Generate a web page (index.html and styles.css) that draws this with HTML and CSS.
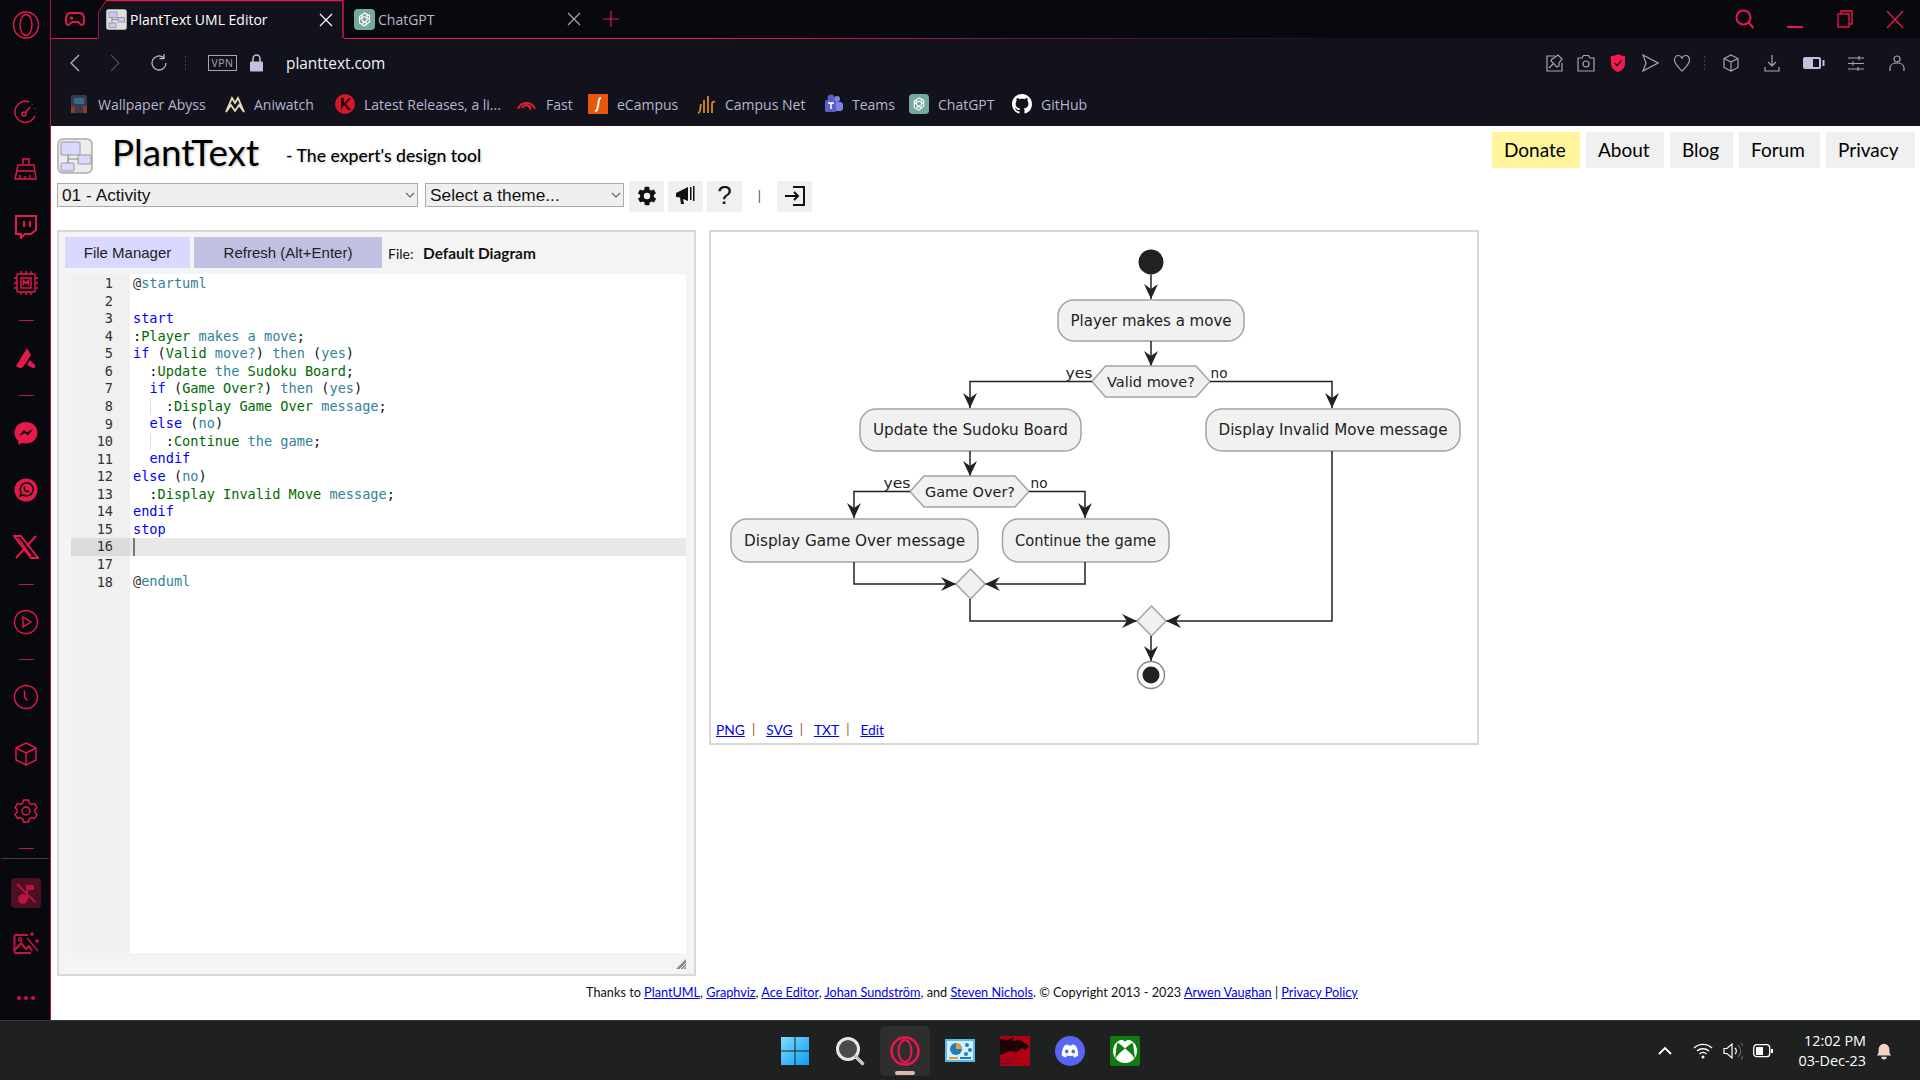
FILE: index.html
```html
<!DOCTYPE html>
<html lang="en">
<head>
<meta charset="utf-8">
<title>PlantText UML Editor</title>
<link rel="stylesheet" href="styles.css">
</head>
<body>
<div class="screen">
  <div class="desk">
    <aside class="side">
      <div class="brand"><svg class="ic30" viewBox="0 0 30 30"><ellipse cx="15" cy="15" rx="12.5" ry="13" class="ln"/><ellipse cx="15" cy="15" rx="6" ry="10.5" class="ln"/></svg></div>
      <div class="si first"><svg class="ic26" viewBox="0 0 26 26"><path d="M22 17A10.500 10.500 0 1 1 16 3" class="ln"/><path d="M19 5l.5.5M22 9l.3.7M23 13v.6" class="ln"/><circle cx="11" cy="15" r="2" class="ln"/><path d="M13 13l4-5" class="ln"/></svg></div>
      <div class="si"><svg class="ic26" viewBox="0 0 26 26"><path d="M10 8V3h6v5M5 9h16l2 14H2z" class="ln"/><path d="M4 15h17M7 23v-4M12 23v-3M17 23v-4" class="ln"/></svg></div>
      <div class="si"><svg class="ic26" viewBox="0 0 26 26"><path d="M3 3h20v14l-5 4h-6l-4 4v-4H3z" class="ln2"/><path d="M11 8v6M17 8v6" class="ln2"/></svg></div>
      <div class="si"><svg class="ic26" viewBox="0 0 26 26"><rect x="4" y="4" width="18" height="18" rx="1" class="ln"/><rect x="8" y="8" width="10" height="10" class="ln"/><path d="M10.500 15.500v-5l2.500 3 2.500-3v5" class="ln"/><path d="M8 1v3M13 1v3M18 1v3M8 22v3M13 22v3M18 22v3M1 8h3M1 13h3M1 18h3M22 8h3M22 13h3M22 18h3" class="ln"/></svg></div>
      <div class="sep"><i class="dash"></i></div>
      <div class="si"><svg class="ic26" viewBox="0 0 26 26"><path d="M3 21L14 3l4 7-8 12c-2 2-5 1-7-1zM17 15l5 5c1 2-1 4-2 3l-6-3z" class="fl"/></svg></div>
      <div class="sep"><i class="dash"></i></div>
      <div class="si"><svg class="ic26" viewBox="0 0 26 26"><path d="M13 2C6.500 2 1.500 6.500 1.500 12.700c0 3.400 1.400 6.200 3.800 8.100V25l3.900-2.100c1.200.3 2.500.5 3.800.5 6.500 0 11.500-4.600 11.500-10.700S19.500 2 13 2z" class="fl"/><path d="M6 16l5-6 3 2.500L20 9l-5 6.500-3-2.500z" fill="#08080f"/></svg></div>
      <div class="si"><svg class="ic26" viewBox="0 0 26 26"><circle cx="13" cy="13" r="11.500" class="fl"/><path d="M7 19l1-3.500a6.500 6.500 0 1 1 2.500 2.500z" fill="none" stroke="#08080f" stroke-width="1.500"/><path d="M10.500 10.500c0 3 2 5 5 5l1-1.500-2-1-1 .7c-.8-.5-1.300-1-1.700-1.800l.7-1-1-2z" fill="#08080f"/></svg></div>
      <div class="si"><svg class="ic26" viewBox="0 0 26 26"><path d="M1 2h7l17 22h-7zM23 2L14 12M3 24l9-10" class="ln2"/><path d="M5 4l13 18" class="ln"/></svg></div>
      <div class="sep"><i class="dash"></i></div>
      <div class="si"><svg class="ic26" viewBox="0 0 26 26"><circle cx="13" cy="13" r="11.500" class="ln"/><path d="M10 8v10l8-5z" class="ln"/></svg></div>
      <div class="sep"><i class="dash"></i></div>
      <div class="si"><svg class="ic26" viewBox="0 0 26 26"><circle cx="13" cy="13" r="11.500" class="ln"/><path d="M11.500 6.500v6.500l3 3.500" class="ln"/></svg></div>
      <div class="si"><svg class="ic26" viewBox="0 0 26 26"><path d="M13 2l10 5v12l-10 5-10-5V7zM3 7l10 5 10-5M13 12v12" class="ln"/></svg></div>
      <div class="si"><svg class="ic26" viewBox="0 0 26 26"><path d="M10.500 2h5l.7 3 2.400 1.400 3-.9 2.400 4.200-2.200 2.100v2.400l2.200 2.100-2.400 4.200-3-.9-2.400 1.400-.7 3h-5l-.7-3-2.400-1.400-3 .9L2 16.300l2.200-2.100v-2.400L2 9.700l2.400-4.200 3 .9 2.400-1.400z" class="ln"/><circle cx="13" cy="13" r="4" class="ln"/></svg></div>
      <div class="sep"><i class="dash"></i></div>
      <div class="sidebreak"></div>
      <div class="si music"><span class="musicbox"><svg class="ic26" viewBox="0 0 26 26"><circle cx="10" cy="19" r="5" fill="#b8143f"/><path d="M13 5h8v5h-6v9h-2z" fill="#b8143f"/><path d="M4 4l18 18" stroke="#b8143f" stroke-width="2"/></svg></span></div>
      <div class="si short"><svg class="ic26 dim" viewBox="0 0 26 26"><path d="M15 5H3a1.500 1.500 0 0 0-1.500 1.500v15A1.500 1.500 0 0 0 3 23h15" class="ln2"/><path d="M2 20l6-7 5 6 3-3 3 5" class="ln2"/><circle cx="7" cy="9.500" r="1.500" class="ln"/><path d="M14 8l11 13M19 2v4M17 4h4M24 9v4M22 11h4" class="ln"/></svg></div>
      <div class="si dots"><i></i><i></i><i></i></div>
    </aside>

    <div class="browser">
      <div class="tabs">
        <div class="gamebtn"><svg class="ic20" viewBox="0 0 20 20"><path d="M5 4h10c2.500 0 4 3 4 7 0 3-1 5-2.500 5S14 13 13 13H7c-1 0-2 3-3.500 3S1 14 1 11c0-4 1.500-7 4-7z" class="ln2"/><path d="M5 9h3M6.500 7.500v3M13 8h.1M15 10h.1" class="ln2"/></svg></div>
        <div class="tab active">
          <svg class="tabedge" viewBox="0 0 246 39" preserveAspectRatio="none"><path d="M0 38V12L8 .5H245V38" fill="none" stroke="#e6194b" stroke-width="1.300"/></svg>
          <svg class="ic21 fav" viewBox="0 0 21 21"><rect x=".5" y=".5" width="20" height="20" rx="2" fill="#dfdfdb" stroke="#aaa"/><rect x="3" y="3" width="8" height="5.500" fill="#c9c8ff" stroke="#888" stroke-width=".7"/><rect x="12" y="8.500" width="6.500" height="4.500" fill="#c9c8ff" stroke="#888" stroke-width=".7"/><rect x="3" y="14" width="7" height="4.500" fill="#c9c8ff" stroke="#888" stroke-width=".7"/><path d="M6 8.500V14M6 10.500h6" stroke="#777" stroke-width=".8"/></svg>
          <span class="tabtitle on">PlantText UML Editor</span>
          <svg class="ic14" viewBox="0 0 14 14"><path d="M1 1l12 12M13 1L1 13" stroke="#fff" stroke-width="1.200"/></svg>
        </div>
        <div class="tab">
          <svg class="ic21" viewBox="0 0 21 21"><rect width="21" height="21" rx="4" fill="#74aa9c"/><path d="M10.500 4l5 2.700v6L10.500 17l-5-3V7.500zM8 5.500v6l5 3M13 5.500v6l-5 3M5.500 10l5-2.500 5 2.500" fill="none" stroke="#fff" stroke-width="1.100"/></svg>
          <span class="tabtitle">ChatGPT</span>
          <svg class="ic14" viewBox="0 0 14 14"><path d="M1 1l12 12M13 1L1 13" stroke="#a9a9ad" stroke-width="1.200"/></svg>
        </div>
        <svg class="ic16 plus" viewBox="0 0 16 16"><path d="M8 0v16M0 8h16" stroke="#e6194b" stroke-width="1.200"/></svg>
        <div class="winctl">
          <svg class="ic20" viewBox="0 0 20 20"><circle cx="8.500" cy="8.500" r="7" class="ln2"/><path d="M13.500 13.500l5 5.500" class="ln2"/></svg>
          <svg class="ic20 low" viewBox="0 0 20 20"><path d="M2 18h16" class="ln2"/></svg>
          <svg class="ic20" viewBox="0 0 20 20"><rect x="3" y="5" width="11" height="13" class="ln"/><path d="M6 5V2h11v13h-3" class="ln"/></svg>
          <svg class="ic20" viewBox="0 0 20 20"><path d="M2 2l16 17M18 2L2 19" class="ln"/></svg>
        </div>
      </div>

      <div class="toolbar">
        <div class="navs">
          <svg class="ic20" viewBox="0 0 20 20"><path d="M14 2L6 10l8 8" fill="none" stroke="#b5b3c5" stroke-width="1.300"/></svg>
          <svg class="ic20" viewBox="0 0 20 20"><path d="M6 2l8 8-8 8" fill="none" stroke="#4a4a55" stroke-width="1.300"/></svg>
          <svg class="ic20 reload" viewBox="0 0 20 20"><path d="M17 10a7 7 0 1 1-2.500-5.400M15 1v4.500h-4.500" fill="none" stroke="#b5b3c5" stroke-width="1.300"/></svg>
          <i class="dotsep"></i>
        </div>
        <span class="vpn">VPN</span>
        <svg class="lock" viewBox="0 0 13 18"><path d="M3 8V4.500a3.500 3.500 0 0 1 7 0V8" fill="none" stroke="#c4bfdc" stroke-width="1.500"/><rect y="7.500" width="13" height="10" rx="1" fill="#c4bfdc"/></svg>
        <span class="url">planttext.com</span>
        <div class="tools">
          <svg class="ic18" viewBox="0 0 18 18"><path d="M10 2H2v15h15V9" class="gl"/><path d="M9 4l4-3 4 4-3 4v3l-2 1-6-6 1-2zM8 10l-4 4" class="gl"/></svg>
          <svg class="ic18" viewBox="0 0 18 18"><path d="M1 4h4l1.500-2.500h5L13 4h4v13H1z" class="gl"/><circle cx="9" cy="10" r="3" class="gl"/></svg>
          <svg class="ic18" viewBox="0 0 18 18"><path d="M9 0c2 1.500 4.500 2 7 2v8c0 4-3.500 6.500-7 8-3.500-1.500-7-4-7-8V2c2.500 0 5-.5 7-2z" fill="#f6194e"/><path d="M5.500 9l2.500 2.500 4.500-5" fill="none" stroke="#111" stroke-width="1.300"/></svg>
          <svg class="ic18" viewBox="0 0 18 18"><path d="M2 1l15 8-15 8 3-8z" class="gl"/></svg>
          <svg class="ic18" viewBox="0 0 18 18"><path d="M9 17C5 13 1.500 10 1.500 6 1.500 3 3.500 1.500 5.500 1.500 7 1.500 8.300 2.500 9 4c.7-1.500 2-2.500 3.500-2.500 2 0 4 1.500 4 4.500 0 4-3.500 7-7.500 11z" class="gl"/></svg>
          <i class="dotsep"></i>
          <div class="tools2">
            <svg class="ic18" viewBox="0 0 18 18"><path d="M9 1l7 3.500v9L9 17l-7-3.500v-9zM2 4.500L9 8l7-3.500M9 8v9" class="gl"/></svg>
            <svg class="ic18" viewBox="0 0 18 18"><path d="M9 1v11M5 8l4 4 4-4M2 13v4h14v-4" class="gl"/></svg>
            <svg class="ic22" viewBox="0 0 22 18"><rect y="3" width="18" height="12" rx="2" fill="#c4bfdc"/><rect x="10" y="5" width="6" height="8" fill="#12121c"/><rect x="19.500" y="6" width="2" height="6" fill="#c4bfdc"/></svg>
            <svg class="ic18" viewBox="0 0 18 18"><path d="M1 4h16M1 9.500h16M1 15h16M12 2v4M6 7.500v4M11 13v4" class="gl"/></svg>
            <svg class="ic18" viewBox="0 0 18 18"><circle cx="9" cy="5" r="3" class="gl"/><path d="M2 17v-3c0-3 3-5 7-5s7 2 7 5v3" class="gl"/></svg>
          </div>
        </div>
      </div>

      <div class="bookmarks">
        <a class="bm b1"><svg class="ic20" viewBox="0 0 20 20"><rect x="2" y="1" width="16" height="18" rx="2" fill="#3a3a4a"/><rect x="5" y="4" width="10" height="6" fill="#356c8d"/><path d="M2 12h4v7H2zM14 12h4v7h-4z" fill="#8a3c2c"/></svg><span>Wallpaper Abyss</span></a>
        <a class="bm b2"><svg class="ic20" viewBox="0 0 20 20"><path d="M1 18L7 4l3 5 3-5 6 14-5-7-4 6-4-6z" fill="none" stroke="#e6dcb8" stroke-width="1.800"/></svg><span>Aniwatch</span></a>
        <a class="bm b3"><svg class="ic20" viewBox="0 0 20 20"><circle cx="10" cy="10" r="10" fill="#d3182a"/><path d="M6 4h3v5l5-5h2l-5 6 5 6h-3l-4-5-3 5z" fill="#2a0508"/></svg><span>Latest Releases, a li...</span></a>
        <a class="bm b4"><svg class="ic20" viewBox="0 0 20 20"><path d="M1 15a9 9 0 0 1 17 0M5 14a5 5 0 0 1 9 0" fill="none" stroke="#d8232f" stroke-width="2"/><path d="M9 9l5 7" stroke="#d8232f" stroke-width="1.500"/></svg><span>Fast</span></a>
        <a class="bm b5"><svg class="ic20" viewBox="0 0 20 20"><rect width="20" height="20" fill="#e8560a"/><path d="M13 4c-3 0-2 4-3 8s-1 5-3 5" fill="none" stroke="#fff" stroke-width="2"/></svg><span>eCampus</span></a>
        <a class="bm b6"><svg class="ic20" viewBox="0 0 20 20"><path d="M2 19c3 0 2-6 3-9M8 19V6M12 19V2M16 19V10c0-2 2-3 3-2" fill="none" stroke="#d98a1e" stroke-width="1.800"/></svg><span>Campus Net</span></a>
        <a class="bm b7"><svg class="ic20" viewBox="0 0 20 20"><circle cx="14" cy="5" r="3" fill="#7b83eb"/><rect x="11" y="8" width="9" height="9" rx="3" fill="#7b83eb"/><circle cx="8" cy="4" r="3.500" fill="#5b5fc7"/><rect x="2" y="6" width="11" height="12" rx="1.500" fill="#5b5fc7"/><path d="M5 9h6M8 9v6" stroke="#fff" stroke-width="1.500"/></svg><span>Teams</span></a>
        <a class="bm b8"><svg class="ic20" viewBox="0 0 21 21"><rect width="21" height="21" rx="4" fill="#74aa9c"/><path d="M10.500 4l5 2.700v6L10.500 17l-5-3V7.500zM8 5.500v6l5 3M13 5.500v6l-5 3M5.500 10l5-2.500 5 2.500" fill="none" stroke="#fff" stroke-width="1.100"/></svg><span>ChatGPT</span></a>
        <a class="bm b9"><svg class="ic20" viewBox="0 0 16 16"><path fill="#fff" d="M8 0C3.580 0 0 3.580 0 8c0 3.540 2.290 6.530 5.470 7.590.4.070.55-.17.550-.38 0-.19-.01-.82-.01-1.490-2.010.37-2.530-.49-2.690-.94-.09-.23-.48-.94-.82-1.130-.28-.15-.68-.52-.01-.53.630-.01 1.080.58 1.230.82.720 1.210 1.870.87 2.330.66.070-.52.280-.87.510-1.070-1.780-.2-3.640-.89-3.640-3.950 0-.87.310-1.590.820-2.150-.08-.2-.36-1.020.08-2.120 0 0 .67-.21 2.200.82.640-.18 1.320-.27 2-.27s1.360.09 2 .27c1.530-1.040 2.200-.82 2.200-.82.440 1.100.160 1.920.08 2.120.51.560.82 1.270.82 2.150 0 3.070-1.870 3.750-3.650 3.950.290.250.540.730.540 1.480 0 1.070-.01 1.930-.01 2.200 0 .21.150.460.550.380A8.010 8.010 0 0 0 16 8c0-4.420-3.580-8-8-8z"/></svg><span>GitHub</span></a>
      </div>

      <main class="page">
        <header class="head">
          <svg class="logo" viewBox="0 0 36 36"><rect x="1" y="1" width="34" height="34" rx="5" fill="#ececec" stroke="#aaa" stroke-width="1.500"/><rect x="4" y="4" width="19" height="13" rx="1" fill="#d9d9ff" stroke="#999"/><rect x="21" y="17" width="13" height="9" rx="1" fill="#d9d9ff" stroke="#999"/><rect x="4" y="25" width="13" height="8" rx="1" fill="#d9d9ff" stroke="#999"/><path d="M11 17v8M11 21h10" stroke="#888" stroke-width="1.200"/></svg>
          <h1 class="title">PlantText</h1>
          <p class="tagline">- The expert's design tool</p>
          <nav class="topnav">
            <a class="nb donate">Donate</a>
            <a class="nb about">About</a>
            <a class="nb blog">Blog</a>
            <a class="nb forum">Forum</a>
            <a class="nb privacy">Privacy</a>
          </nav>
        </header>

        <div class="controls">
          <select class="sel sel1"><option>01 - Activity</option></select>
          <select class="sel sel2"><option>Select a theme...</option></select>
          <span class="tb gear"><svg class="ic22" viewBox="0 0 24 24"><path fill="#111" d="M19.400 13c.1-.3.1-.7.1-1s0-.7-.1-1l2.100-1.600c.2-.2.2-.4.100-.6l-2-3.500c-.1-.2-.4-.3-.6-.2l-2.500 1c-.5-.4-1.100-.7-1.700-1l-.4-2.600c0-.3-.2-.5-.5-.5h-4c-.3 0-.5.200-.5.400l-.4 2.700c-.6.200-1.200.6-1.700 1l-2.500-1c-.2-.1-.5 0-.6.200l-2 3.500c-.1.200-.1.500.1.600L4.600 11c-.1.300-.1.700-.1 1s0 .7.100 1l-2.100 1.600c-.2.200-.2.400-.1.600l2 3.500c.1.200.4.300.6.200l2.500-1c.5.400 1.100.7 1.700 1l.4 2.600c0 .3.200.5.500.5h4c.3 0 .5-.2.500-.4l.4-2.700c.6-.2 1.200-.6 1.700-1l2.500 1c.2.100.5 0 .6-.2l2-3.500c.1-.2.1-.5-.1-.6zM12 15.500a3.500 3.500 0 1 1 0-7 3.500 3.500 0 0 1 0 7z"/></svg></span>
          <span class="tb"><svg class="ic22" viewBox="0 0 22 22"><path fill="#111" d="M1 8l12-6v14l-5-2 1 5H6l-1-6.500L1 12zM15 2h1.500v13H15zM18 1h1.500v15H18z"/></svg></span>
          <span class="tb q">?</span>
          <span class="pipe">|</span>
          <span class="tb"><svg class="ic22" viewBox="0 0 22 22"><path d="M9 2h11v18H9M1 11h13M10 7l4 4-4 4" fill="none" stroke="#111" stroke-width="2"/></svg></span>
        </div>

        <div class="work">
          <section class="leftp">
            <div class="pbar">
              <button class="btn fm">File Manager</button>
              <button class="btn rf">Refresh (Alt+Enter)</button>
              <span class="filelab">File: <b>Default Diagram</b></span>
            </div>
            <div class="editor">
              <div class="gutter">
                <div>1</div><div>2</div><div>3</div><div>4</div><div>5</div><div>6</div><div>7</div><div>8</div><div>9</div><div>10</div><div>11</div><div>12</div><div>13</div><div>14</div><div>15</div><div class="cur">16</div><div>17</div><div>18</div>
              </div>
              <div class="code">
                <div><span class="p">@</span><span class="t">startuml</span></div>
                <div>&nbsp;</div>
                <div><span class="k">start</span></div>
                <div>:<span class="g">Player</span> <span class="t">makes a move</span>;</div>
                <div><span class="k">if</span> (<span class="g">Valid</span> <span class="t">move?</span>) <span class="t">then</span> (<span class="t">yes</span>)</div>
                <div>  :<span class="g">Update</span> <span class="t">the</span> <span class="g">Sudoku Board</span>;</div>
                <div>  <span class="k">if</span> (<span class="g">Game Over?</span>) <span class="t">then</span> (<span class="t">yes</span>)</div>
                <div class="ig">    :<span class="g">Display Game Over</span> <span class="t">message</span>;</div>
                <div>  <span class="k">else</span> (<span class="t">no</span>)</div>
                <div class="ig">    :<span class="g">Continue</span> <span class="t">the game</span>;</div>
                <div>  <span class="k">endif</span></div>
                <div><span class="k">else</span> (<span class="t">no</span>)</div>
                <div>  :<span class="g">Display Invalid Move</span> <span class="t">message</span>;</div>
                <div><span class="k">endif</span></div>
                <div><span class="k">stop</span></div>
                <div class="cur"><i class="caret"></i></div>
                <div>&nbsp;</div>
                <div><span class="p">@</span><span class="t">enduml</span></div>
              </div>
            </div>
            <div class="gripbar"><svg class="grip" viewBox="0 0 10 10"><path d="M10 0v10H0z" fill="#8a8a8a"/><path d="M4 10l6-6M7 10l3-3" stroke="#eee"/></svg></div>
          </section>

          <section class="rightp">
            <svg class="diagram" viewBox="711 232 766 470">
              <defs>
                <marker id="ah" markerUnits="userSpaceOnUse" markerWidth="16" markerHeight="16" refX="15" refY="7" orient="auto"><path d="M0 0L15 7 0 14 5 7z" fill="#222"/></marker>
              </defs>
              <circle cx="1151" cy="262" r="12.500" fill="#222"/>
              <path class="wire" d="M1151 274.500V299" marker-end="url(#ah)"/>
              <rect class="act" x="1058" y="300" width="186" height="41" rx="16"/>
              <text class="lbl" x="1151" y="326" textLength="161" lengthAdjust="spacingAndGlyphs">Player makes a move</text>
              <path class="wire" d="M1151 341V366" marker-end="url(#ah)"/>
              <path class="act" d="M1105.500 366H1196L1210 381.500 1196 397H1105.500L1092 381.500z"/>
              <text class="lbl sm" x="1151" y="387" textLength="88" lengthAdjust="spacingAndGlyphs">Valid move?</text>
              <path class="wire" d="M1092 381.500H970V408" marker-end="url(#ah)"/>
              <path class="wire" d="M1210 381.500H1332V408" marker-end="url(#ah)"/>
              <text class="lbl sm" x="1079" y="378" textLength="27" lengthAdjust="spacingAndGlyphs">yes</text>
              <text class="lbl sm" x="1219" y="378" textLength="17" lengthAdjust="spacingAndGlyphs">no</text>
              <rect class="act" x="860" y="409" width="221" height="42" rx="16"/>
              <text class="lbl" x="970.500" y="435" textLength="195" lengthAdjust="spacingAndGlyphs">Update the Sudoku Board</text>
              <rect class="act" x="1206" y="409" width="254" height="42" rx="16"/>
              <text class="lbl" x="1333" y="435" textLength="229" lengthAdjust="spacingAndGlyphs">Display Invalid Move message</text>
              <path class="wire" d="M970 451V476" marker-end="url(#ah)"/>
              <path class="act" d="M924 476H1015L1029 491.500 1015 507H924L910 491.500z"/>
              <text class="lbl sm" x="970" y="497" textLength="90" lengthAdjust="spacingAndGlyphs">Game Over?</text>
              <path class="wire" d="M910 491.500H854V518" marker-end="url(#ah)"/>
              <path class="wire" d="M1029 491.500H1085V518" marker-end="url(#ah)"/>
              <text class="lbl sm" x="897" y="488" textLength="27" lengthAdjust="spacingAndGlyphs">yes</text>
              <text class="lbl sm" x="1039" y="488" textLength="17" lengthAdjust="spacingAndGlyphs">no</text>
              <rect class="act" x="731" y="519" width="247" height="43" rx="16"/>
              <text class="lbl" x="854.500" y="546" textLength="221" lengthAdjust="spacingAndGlyphs">Display Game Over message</text>
              <rect class="act" x="1002.500" y="519" width="166.500" height="43" rx="16"/>
              <text class="lbl" x="1085.500" y="546" textLength="141" lengthAdjust="spacingAndGlyphs">Continue the game</text>
              <path class="wire" d="M854 562V584H956" marker-end="url(#ah)"/>
              <path class="wire" d="M1085 562V584H985" marker-end="url(#ah)"/>
              <path class="act" d="M970.500 569L985 584 970.500 599 956 584z"/>
              <path class="wire" d="M970 599V621H1137" marker-end="url(#ah)"/>
              <path class="wire" d="M1332 451V621H1166" marker-end="url(#ah)"/>
              <path class="act" d="M1151.500 606L1166 621 1151.500 636 1137 621z"/>
              <path class="wire" d="M1151 636V661" marker-end="url(#ah)"/>
              <circle cx="1151" cy="675" r="13.500" fill="#fff" stroke="#888" stroke-width="1.500"/>
              <circle cx="1151" cy="675" r="8.500" fill="#222"/>
            </svg>
            <div class="dlinks"><a class="lnk">PNG</a><span class="bar">|</span><a class="lnk">SVG</a><span class="bar">|</span><a class="lnk">TXT</a><span class="bar">|</span><a class="lnk">Edit</a></div>
          </section>
        </div>

        <footer class="foot">Thanks to <a class="lnk">PlantUML</a>, <a class="lnk">Graphviz</a>, <a class="lnk">Ace Editor</a>, <a class="lnk">Johan Sundström</a>, and <a class="lnk">Steven Nichols</a>. © Copyright 2013 - 2023 <a class="lnk">Arwen Vaughan</a> | <a class="lnk">Privacy Policy</a></footer>
      </main>
    </div>
  </div>

  <div class="taskbar">
    <div></div>
    <div class="apps">
      <span class="app"><svg class="ic30" viewBox="0 0 30 30"><defs><linearGradient id="win" x1="0" y1="0" x2="1" y2="1"><stop offset="0" stop-color="#7edcff"/><stop offset="1" stop-color="#0f9cf5"/></linearGradient></defs><path fill="url(#win)" d="M1 1h13.500v13.500H1zM15.500 1H29v13.500H15.500zM1 15.500h13.500V29H1zM15.500 15.500H29V29H15.500z"/></svg></span>
      <span class="app"><svg class="ic30" viewBox="0 0 30 30"><circle cx="13" cy="13" r="10.500" fill="#4b4b4b" stroke="#e6e6e6" stroke-width="3"/><path d="M20.500 20.500l7 7" stroke="#c8c8c8" stroke-width="3.500" stroke-linecap="round"/></svg></span>
      <span class="app now"><svg class="ic30" viewBox="0 0 30 30"><circle cx="15" cy="15" r="13.500" fill="none" stroke="#e8174d" stroke-width="2.500"/><ellipse cx="15" cy="15" rx="6.500" ry="11" fill="none" stroke="#e8174d" stroke-width="2"/></svg><i class="pill"></i></span>
      <span class="app"><svg class="ic30" viewBox="0 0 30 30"><rect y="3" width="30" height="23" fill="#59b9ea"/><rect x="2" y="5" width="26" height="19" fill="#d5eefb"/><circle cx="11" cy="13" r="6" fill="#1c7fc4"/><path d="M11 13V7a6 6 0 0 1 6 6z" fill="#f09a22"/><circle cx="22" cy="9" r="2" fill="#1c7fc4"/><circle cx="25" cy="14" r="2" fill="#1c7fc4"/><circle cx="21" cy="18" r="2" fill="#1c7fc4"/><path d="M4 22h9" stroke="#f09a22" stroke-width="2"/><path d="M15 22h11" stroke="#1c7fc4" stroke-width="2"/></svg></span>
      <span class="app"><svg class="ic30" viewBox="0 0 30 30"><rect width="30" height="30" fill="#b00014"/><path d="M0 3l8 1 6-3-2 4 8-1 9 6-4 4-3-2-5 4-7-1-10 4z" fill="#1a0508"/><path d="M0 23c6 3 12 0 16-3M0 27c5 1 10 0 13-2" stroke="#7a0a30" stroke-width="1.500" fill="none"/></svg></span>
      <span class="app"><svg class="ic30" viewBox="0 0 30 30"><circle cx="15" cy="15" r="15" fill="#5865f2"/><path d="M9.500 9.500c1.500-.7 3-1 3.500-1l.5 1h3l.5-1c.5 0 2 .3 3.500 1 2 3 3 6.500 2.700 10-1.500 1.100-3 1.700-4.200 2l-1-1.700c.6-.2 1.100-.5 1.600-.8-2.900 1.300-6.300 1.300-9.200 0 .5.3 1 .6 1.600.8l-1 1.700c-1.200-.3-2.700-.9-4.200-2-.3-3.500.7-7 2.700-10z" fill="#fff"/><ellipse cx="11.700" cy="15.500" rx="1.800" ry="2" fill="#5865f2"/><ellipse cx="18.300" cy="15.500" rx="1.800" ry="2" fill="#5865f2"/></svg></span>
      <span class="app"><svg class="ic30" viewBox="0 0 30 30"><rect width="30" height="30" rx="2" fill="#107c10"/><circle cx="15" cy="15" r="12" fill="#fff"/><path d="M15 12.500C12 9.500 9 7 7 7l-2 16C8 18 12 15 15 12.500zM15 12.500C18 9.500 21 7 23 7l2 16C22 18 18 15 15 12.500z" fill="#107c10"/><path d="M15 16c-4 3-7 7-7 8l7 3 7-3c0-1-3-5-7-8z" fill="#fff"/><path d="M8 3c3 0 5 1 7 2.500C17 4 19 3 22 3l-7-2z" fill="#107c10"/></svg></span>
    </div>
    <div class="tray">
      <svg class="ic16 chev" viewBox="0 0 16 16"><path d="M2 11l6-6 6 6" fill="none" stroke="#fff" stroke-width="1.800"/></svg>
      <svg class="ic20 wifi" viewBox="0 0 20 20"><path d="M1 7a13 13 0 0 1 18 0M4 10a9 9 0 0 1 12 0M6.500 13a5 5 0 0 1 7 0" fill="none" stroke="#fff" stroke-width="1.400"/><circle cx="10" cy="16" r="1.500" fill="#fff"/></svg>
      <svg class="ic20 vol" viewBox="0 0 20 20"><path d="M1 7.500h3L9 3v14l-5-4.500H1z" fill="none" stroke="#fff" stroke-width="1.200"/><path d="M12 7a4 4 0 0 1 0 6" fill="none" stroke="#fff" stroke-width="1.200"/><path d="M15 4a8 8 0 0 1 0 12M18 2a11 11 0 0 1 0 16" fill="none" stroke="#666" stroke-width="1.200"/></svg>
      <svg class="ic20 batt" viewBox="0 0 20 14"><rect x=".7" y=".7" width="16" height="12" rx="3" fill="none" stroke="#fff" stroke-width="1.300"/><rect x="3" y="3" width="7" height="8" fill="#fff"/><rect x="18" y="5" width="2" height="4" fill="#fff"/></svg>
      <div class="clock"><div>12:02 PM</div><div>03-Dec-23</div></div>
      <svg class="ic18 bell" viewBox="0 0 18 20"><path d="M1 15c2-2 2-4 2-7a6 6 0 0 1 12 0c0 3 0 5 2 7z" fill="#f2d3c4"/><path d="M6 16.500h6a3 3 0 0 1-6 0z" fill="#f2d3c4"/></svg>
    </div>
  </div>
</div>
</body>
</html>
```

FILE: styles.css
```css
* { box-sizing: border-box; }
html, body { margin: 0; height: 100%; overflow: hidden; }
body { background: #08080f; font-family: "Open Sans", "Noto Sans", sans-serif; }
svg { display: block; flex: none; }
.ln { fill: none; stroke: #e6194b; stroke-width: 1.400; }
.ln2 { fill: none; stroke: #e6194b; stroke-width: 2; }
.fl { fill: #e6194b; }
.gl { fill: none; stroke: #a7a4b6; stroke-width: 1.200; }
.ic14 { width: 14px; height: 14px; }
.ic16 { width: 16px; height: 16px; }
.ic18 { width: 18px; height: 18px; }
.ic20 { width: 20px; height: 20px; }
.ic21 { width: 21px; height: 21px; }
.ic22 { width: 22px; height: 22px; }
.ic26 { width: 26px; height: 26px; }
.ic30 { width: 30px; height: 30px; }

.screen { width: 1920px; height: 1080px; display: flex; flex-direction: column; overflow: hidden; }
.desk { height: 1020px; display: flex; flex: none; }

/* sidebar */
.side { width: 51px; height: 1020px; padding-left: 2px; background: #08080f; border-right: 1px solid #b3143c; display: flex; flex-direction: column; align-items: center; flex: none; }
.brand { height: 50px; flex: none; display: flex; align-items: center; justify-content: center; width: 100%; }
.si { height: 57px; width: 100%; display: flex; align-items: center; justify-content: center; flex: none; }
.si.first { margin-top: 33.500px; }
.sep { height: 18px; width: 100%; display: flex; align-items: center; justify-content: center; flex: none; }
.dash { display: block; width: 15px; height: 1px; background: #c9163f; }
.sidebreak { width: 100%; height: 1px; background: #3c3c44; flex: none; margin-left: -2px; }
.si.music { height: 50px; margin-top: 9px; }
.musicbox { width: 30px; height: 30px; border-radius: 4px; background: #4d0f22; display: flex; align-items: center; justify-content: center; }
.si.short { height: 50px; }
.dim { opacity: .85; }
.si.dots { gap: 3px; height: 40px; margin-top: 10px; }
.dots i { display: block; width: 4px; height: 4px; border-radius: 50%; background: #d1143f; }

/* browser chrome */
.browser { flex: 1; min-width: 0; display: flex; flex-direction: column; }
.tabs { height: 38px; display: flex; align-items: center; background: #08080f; flex: none; }
.gamebtn { width: 47px; display: flex; justify-content: center; }
.tab { width: 246px; height: 38px; display: flex; align-items: center; padding: 0 9px 0 10px; position: relative; }
.tab.active { background: #12121c; height: 39px; align-self: flex-start; z-index: 2; clip-path: polygon(0 12px, 8px 0, 100% 0, 100% 100%, 0 100%); padding: 0 11px 0 8px; }
.tabedge { position: absolute; inset: 0; width: 100%; height: 100%; }
.fav { position: relative; }
.tabtitle { flex: 1; margin-left: 3px; font-size: 14px; color: #b9b6c9; white-space: nowrap; }
.tabtitle.on { color: #fff; }
.plus { margin-left: 13px; }
.winctl { margin-left: auto; display: flex; gap: 30px; padding-right: 15px; }

.toolbar { height: 47px; flex: none; background: #12121c; display: flex; align-items: center; border-top: 1px solid; border-image: linear-gradient(90deg, #e6194b 0, #e6194b 35%, #12121c 70%) 1; padding: 2px 0 0 14px; }
.navs { display: flex; align-items: center; gap: 20px; }
.reload { margin-left: 4px; }
.dotsep { display: block; width: 1px; height: 14px; background: repeating-linear-gradient(#3e3e48 0 2px, transparent 2px 4px); }
.navs .dotsep { margin-left: -4px; }
.vpn { margin-left: 22px; width: 29px; height: 16px; border: 1px solid #a7a4b6; color: #a7a4b6; font-size: 10.500px; line-height: 14px; text-align: center; letter-spacing: .5px; }
.lock { width: 13px; height: 18px; margin-left: 13px; }
.url { margin-left: 23px; font-size: 15.400px; color: #f1f1f4; }
.tools { margin-left: auto; display: flex; align-items: center; gap: 14px; padding-right: 14px; }
.tools .dotsep { margin: 0 3px 0 -1px; }
.tools2 { display: flex; align-items: center; gap: 23px; }
.tools2 .ic22 { margin: 0 -1px; }

.bookmarks { height: 41px; flex: none; padding-bottom: 3px; background: #12121c; display: flex; align-items: center; }
.bm { display: flex; align-items: center; gap: 9px; font-size: 14px; color: #b8b4d2; white-space: nowrap; flex: none; }
.b1 { margin-left: 18px; width: 156px; }
.b2 { width: 110px; }
.b3 { width: 182px; }
.b4 { width: 71px; }
.b5 { width: 108px; }
.b6 { width: 127px; }
.b7 { width: 86px; }
.b8 { width: 103px; }

/* page */
.page { flex: 1; background: #fff; min-height: 0; padding-left: 6px; color: #000; font-family: Lato, "Open Sans", sans-serif; }
.head { height: 55px; display: flex; align-items: flex-start; padding-right: 5px; }
.logo { width: 36px; height: 36px; margin-top: 12px; }
.title { margin: 4px 0 0 19px; font-size: 36.800px; line-height: 44px; font-weight: 400; text-shadow: 1px 1px 3px #bbb; }
.tagline { margin: 18px 0 0 27px; font-size: 17.600px; line-height: 24px; font-weight: 500; text-shadow: 1px 1px 3px #ccc; }
.topnav { margin-left: auto; margin-top: 6px; display: flex; gap: 6px; }
.nb { height: 36px; background: #f0f0f0; font-size: 19px; line-height: 36px; padding: 0 12px; color: #000; }
.nb.donate { background: #fff59d; width: 88px; }
.nb.about { width: 78px; }
.nb.blog { width: 63px; }
.nb.forum { width: 81px; }
.nb.privacy { width: 89px; }

.controls { height: 31px; display: flex; align-items: flex-start; }
.sel { appearance: none; height: 24px; margin-top: 2px; background-color: #efefef; background-image: url("data:image/svg+xml,%3Csvg xmlns='http://www.w3.org/2000/svg' width='10' height='6'%3E%3Cpath d='M1 1l4 4 4-4' fill='none' stroke='%23666' stroke-width='1.200'/%3E%3C/svg%3E"); background-repeat: no-repeat; background-position: right 2px center; border: 1px solid #aaa; font-family: "Liberation Sans", sans-serif; font-size: 17.300px; line-height: 22px; color: #111; padding: 0 0 0 4px; border-radius: 0; }
.sel1 { width: 361px; }
.sel2 { width: 199px; margin-left: 7px; }
.tb { width: 35px; height: 31px; padding-bottom: 2px; background: #f0f0f0; display: flex; align-items: center; justify-content: center; margin-left: 4px; }
.tb.gear { margin-left: 5px; }
.tb.q { font-family: "Liberation Sans", sans-serif; font-size: 26px; color: #111; }
.pipe { width: 35px; height: 31px; line-height: 31px; text-align: center; font-size: 13px; color: #444; }
.pipe + .tb { margin-left: 0; }

.work { margin-top: 18px; display: flex; align-items: flex-start; gap: 13px; }
.leftp { width: 639px; height: 746px; border: 2px solid #d8d8d8; background: #f4f4f4; padding: 5px 8px 0 6px; }
.pbar { height: 31px; display: flex; align-items: center; gap: 4px; }
.btn { height: 31px; border: 0; padding: 0; font-family: "Liberation Sans", sans-serif; font-size: 15px; color: #222; }
.fm { width: 125px; background: #d9d9ff; }
.rf { width: 188px; background: #c2c0e2; }
.filelab { margin-left: 2px; font-size: 14px; color: #111; }
.filelab b { margin-left: 6px; font-size: 15.400px; }
.editor { margin: 6px 0 0 6px; width: 615px; height: 679px; display: flex; background: #fff; font-family: "DejaVu Sans Mono", monospace; font-size: 13.600px; line-height: 17.560px; }
.gutter { width: 59px; padding-top: 1px; background: #f0f0f0; color: #333; text-align: right; padding-right: 17px; flex: none; }
.gutter .cur { background: #dcdcdc; margin-right: -17px; padding-right: 17px; }
.code { flex: 1; padding-top: 1px; color: #111; }
.code > div { padding-left: 3px; height: 17.560px; white-space: pre; }
.code .cur { background: #e8e8e8; position: relative; }
.code .ig { background: linear-gradient(#dcdcdc, #dcdcdc) 20px 0 / 1px 100% no-repeat; }
.caret { position: absolute; left: 3px; top: 0; width: 2px; height: 18px; background: #777; }
.k { color: #0000ff; }
.g { color: #006a00; }
.t { color: #318495; }
.p { color: #333; }
.gripbar { display: flex; justify-content: flex-end; padding: 6px 0 0; }
.grip { width: 10px; height: 10px; }

.rightp { width: 770px; height: 515px; border: 2px solid #d8d8d8; background: #fff; }
.diagram { width: 766px; height: 470px; }
.wire { fill: none; stroke: #222; stroke-width: 1.500; }
.act { fill: #f1f1f1; stroke: #a3a3a3; stroke-width: 1.500; }
.lbl { font-family: "DejaVu Sans", sans-serif; font-size: 16px; fill: #222; text-anchor: middle; }
.lbl.sm { font-size: 14px; }
.dlinks { display: flex; align-items: center; height: 24px; margin-top: 15px; padding-left: 5px; font-size: 13.800px; }
.lnk { color: #0000ee; text-decoration: underline; }
.bar { color: #8a5a20; margin: 0 11px 0 7px; font-size: 13px; }
.foot { margin-top: 8px; padding-right: 33px; text-align: center; font-size: 12.700px; color: #111; }

/* taskbar */
.taskbar { height: 60px; flex: none; background: #1f2020; border-top: 1px solid #343434; display: grid; grid-template-columns: minmax(0, 1fr) auto minmax(0, 1fr); align-items: center; }
.apps { display: flex; gap: 5px; }
.app { width: 50px; height: 50px; display: flex; align-items: center; justify-content: center; border-radius: 5px; position: relative; }
.app.now { background: #2e2e2e; }
.pill { position: absolute; left: 15px; bottom: 1px; width: 20px; height: 4px; border-radius: 2px; background: #e0b8aa; }
.tray { display: flex; align-items: center; justify-content: flex-end; color: #fff; padding-right: 27px; }
.wifi { margin-left: 20px; }
.vol { margin-left: 10px; }
.batt { margin-left: 10px; }
.clock { margin-left: 13px; width: 80px; text-align: right; font-size: 14.400px; line-height: 20px; white-space: nowrap; }
.bell { margin-left: 9px; }
```
